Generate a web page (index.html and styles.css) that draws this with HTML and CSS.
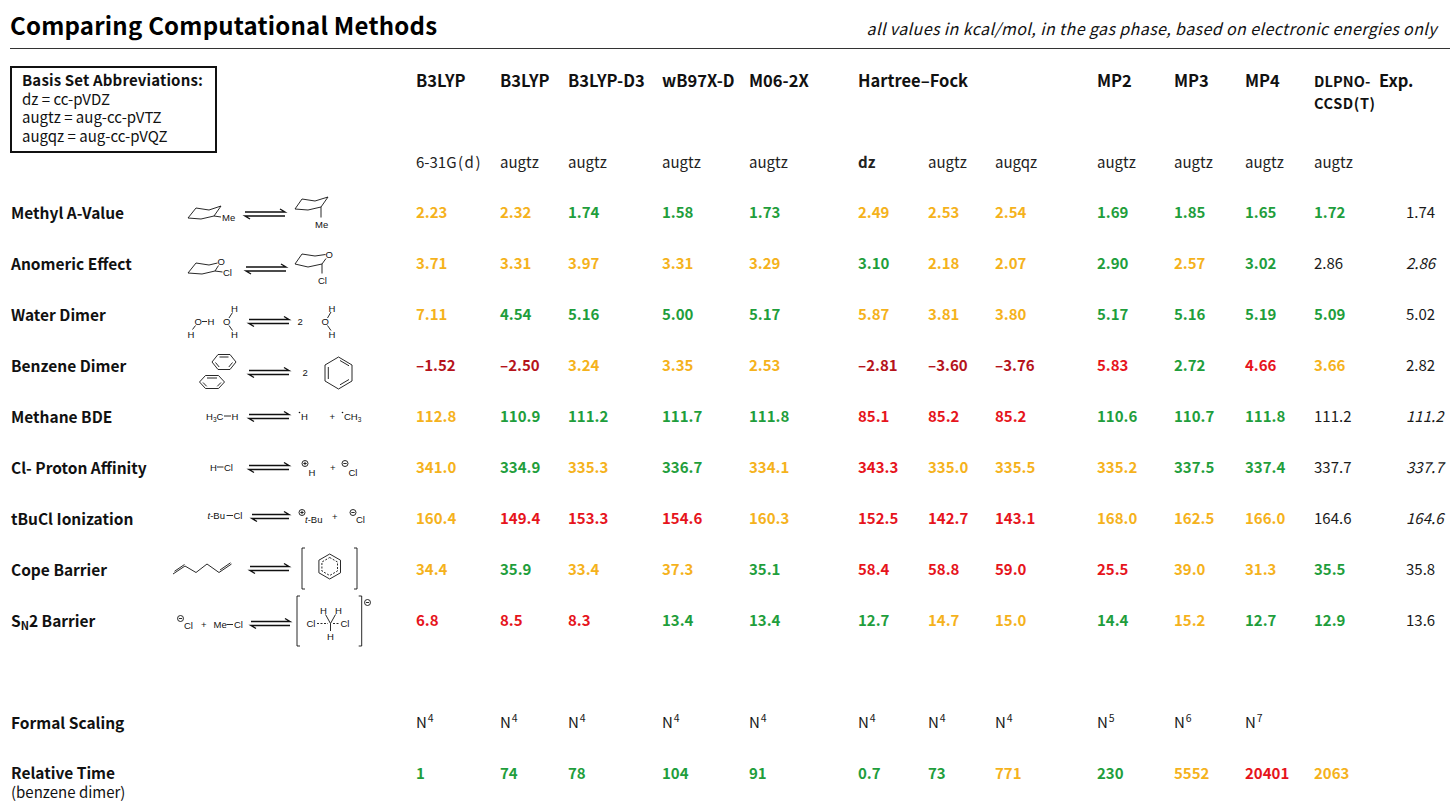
FILE: index.html
```html
<!DOCTYPE html>
<html lang="en">
<head>
<meta charset="utf-8">
<title>Comparing Computational Methods</title>
<link rel="stylesheet" href="styles.css">
</head>
<body>
<header class="top">
  <h1 class="title">Comparing Computational Methods</h1>
  <p class="subtitle">all values in kcal/mol, in the gas phase, based on electronic energies only</p>
</header>
<main class="table">
  <div class="basis-box">
    <div class="basis-head">Basis Set Abbreviations:</div>
    <div>dz = cc-pVDZ</div>
    <div>augtz = aug-cc-pVTZ</div>
    <div>augqz = aug-cc-pVQZ</div>
  </div>

  <div class="hd">B3LYP</div>
  <div class="hd">B3LYP</div>
  <div class="hd">B3LYP-D3</div>
  <div class="hd">wB97X-D</div>
  <div class="hd">M06-2X</div>
  <div class="hd">Hartree–Fock</div>
  <div class="hd"></div>
  <div class="hd"></div>
  <div class="hd">MP2</div>
  <div class="hd">MP3</div>
  <div class="hd">MP4</div>
  <div class="hd hd-small"><div>DLPNO-</div><div class="wide">CCSD(T)</div></div>
  <div class="hd">Exp.</div>

  <div class="bs"><span>6-31G<span class="pp">(</span>d<span class="pp">)</span></span></div>
  <div class="bs">augtz</div>
  <div class="bs">augtz</div>
  <div class="bs">augtz</div>
  <div class="bs">augtz</div>
  <div class="bs bold">dz</div>
  <div class="bs">augtz</div>
  <div class="bs">augqz</div>
  <div class="bs">augtz</div>
  <div class="bs">augtz</div>
  <div class="bs">augtz</div>
  <div class="bs">augtz</div>
  <div class="bs"></div>

  <!-- Row 1 -->
  <div class="lab">Methyl A-Value</div>
  <div class="st">
    <svg class="mol" viewBox="170 187 246 51" width="246" height="51">
      <g class="ln">
        <path d="M188 219 L196 209 L209 211 L221 207 L214 217 L201 220 Z"/>
        <path d="M214 217 L221 218"/>
        <path class="arr" d="M245 213 H285 l-5 -3 M285 217 H245 l5 3"/>
        <path d="M295 210 L302 200 L315 202 L328 198 L321 208 L308 211 Z"/>
        <path d="M321 208 V218.5"/>
      </g>
      <text x="222" y="221.5">Me</text>
      <text x="315" y="228.5">Me</text>
    </svg>
  </div>
  <div class="v o">2.23</div><div class="v o">2.32</div><div class="v g">1.74</div><div class="v g">1.58</div><div class="v g">1.73</div>
  <div class="v o">2.49</div><div class="v o">2.53</div><div class="v o">2.54</div>
  <div class="v g">1.69</div><div class="v g">1.85</div><div class="v g">1.65</div><div class="v g">1.72</div><div class="v exp">1.74</div>

  <!-- Row 2 -->
  <div class="lab">Anomeric Effect</div>
  <div class="st">
    <svg class="mol" viewBox="170 238 246 51" width="246" height="51">
      <g class="ln">
        <path d="M217.5 264 L209 266 L196 264 L188 274 L202 275 L215 272 L218.5 266.5"/>
        <path d="M215 272 L222.5 273"/>
        <path class="arr" d="M246 268 H286 l-5 -3 M286 272 H246 l5 3"/>
        <path d="M325.5 255.5 L315 257 L302 255 L295 265 L308 268 L322 265 L326 259.5"/>
        <path d="M322 265 V274.5"/>
      </g>
      <text x="217.5" y="266">O</text>
      <text x="223" y="276.5">Cl</text>
      <text x="325.5" y="259">O</text>
      <text x="318" y="284.5">Cl</text>
    </svg>
  </div>
  <div class="v o">3.71</div><div class="v o">3.31</div><div class="v o">3.97</div><div class="v o">3.31</div><div class="v o">3.29</div>
  <div class="v g">3.10</div><div class="v o">2.18</div><div class="v o">2.07</div>
  <div class="v g">2.90</div><div class="v o">2.57</div><div class="v g">3.02</div><div class="v k">2.86</div><div class="v exp it">2.86</div>

  <!-- Row 3 -->
  <div class="lab">Water Dimer</div>
  <div class="st">
    <svg class="mol" viewBox="170 289 246 51" width="246" height="51">
      <g class="ln">
        <path d="M202 322.5 H207"/>
        <path d="M195.5 326.5 L192.5 330.5"/>
        <path d="M229 319 L232.5 313.5 M229 326.5 L232.5 331.5"/>
        <path class="arr" d="M249 320.5 H289 l-5 -3 M289 324.5 H249 l5 3"/>
        <path d="M327.5 319 L331 313 M327.5 326.5 L331 331.5"/>
      </g>
      <text x="194.5" y="326">O</text>
      <text x="207.5" y="326">H</text>
      <text x="187.5" y="338.5">H</text>
      <text x="231" y="313">H</text>
      <text x="223" y="326">O</text>
      <text x="231" y="338.5">H</text>
      <text x="297.5" y="326">2</text>
      <text x="328.5" y="312.5">H</text>
      <text x="321.5" y="326">O</text>
      <text x="328.5" y="338.5">H</text>
    </svg>
  </div>
  <div class="v o">7.11</div><div class="v g">4.54</div><div class="v g">5.16</div><div class="v g">5.00</div><div class="v g">5.17</div>
  <div class="v o">5.87</div><div class="v o">3.81</div><div class="v o">3.80</div>
  <div class="v g">5.17</div><div class="v g">5.16</div><div class="v g">5.19</div><div class="v g">5.09</div><div class="v exp">5.02</div>

  <!-- Row 4 -->
  <div class="lab">Benzene Dimer</div>
  <div class="st">
    <svg class="mol" viewBox="170 340 246 51" width="246" height="51">
      <g class="ln">
        <path d="M212 363 L218 355.5 L230 355.5 L236 363 L230 370.5 L218 370.5 Z"/>
        <path d="M219.5 358 H228.5 M232.5 363.5 L228.8 368 M215.5 363.5 L219.2 368"/>
        <path d="M199.5 383 L205.5 376.5 L218.5 376.5 L224.5 383 L218.5 389.5 L205.5 389.5 Z"/>
        <path d="M207 379 H217 M221 383.5 L217.3 387.3 M203 383.5 L206.7 387.3"/>
        <path class="arr" d="M249 371.5 H289 l-5 -3 M289 375.5 H249 l5 3"/>
        <path d="M338.5 358 L352 366 L352 382 L338.5 390 L325 382 L325 366 Z"/>
        <path d="M340 361.5 L349 366.8 M349 380.5 L340 385.8 M328.3 380 V368"/>
      </g>
      <text x="302.5" y="376.5">2</text>
    </svg>
  </div>
  <div class="v d">–1.52</div><div class="v d">–2.50</div><div class="v o">3.24</div><div class="v o">3.35</div><div class="v o">2.53</div>
  <div class="v d">–2.81</div><div class="v d">–3.60</div><div class="v d">–3.76</div>
  <div class="v r">5.83</div><div class="v g">2.72</div><div class="v r">4.66</div><div class="v o">3.66</div><div class="v exp">2.82</div>

  <!-- Row 5 -->
  <div class="lab">Methane BDE</div>
  <div class="st">
    <svg class="mol" viewBox="170 391 246 51" width="246" height="51">
      <g class="ln">
        <path d="M224 417 H231"/>
        <path class="arr" d="M249 415.5 H289 l-5 -3 M289 419.5 H249 l5 3"/>
      </g>
      <text x="206" y="420.5">H<tspan class="sub" dy="2">3</tspan><tspan dy="-2">C</tspan></text>
      <text x="231.5" y="420.5">H</text>
      <circle class="dot" cx="299.5" cy="413.5" r="0.8"/>
      <text x="301" y="420.5">H</text>
      <text x="329.5" y="420.5">+</text>
      <circle class="dot" cx="342.5" cy="413.5" r="0.8"/>
      <text x="344" y="420.5">CH<tspan class="sub" dy="2">3</tspan></text>
    </svg>
  </div>
  <div class="v o">112.8</div><div class="v g">110.9</div><div class="v g">111.2</div><div class="v g">111.7</div><div class="v g">111.8</div>
  <div class="v r">85.1</div><div class="v r">85.2</div><div class="v r">85.2</div>
  <div class="v g">110.6</div><div class="v g">110.7</div><div class="v g">111.8</div><div class="v k">111.2</div><div class="v exp it">111.2</div>

  <!-- Row 6 -->
  <div class="lab">Cl- Proton Affinity</div>
  <div class="st">
    <svg class="mol" viewBox="170 442 246 51" width="246" height="51">
      <g class="ln">
        <path d="M217 468 H223.5"/>
        <path class="arr" d="M249 466.5 H289 l-5 -3 M289 470.5 H249 l5 3"/>
        <circle cx="305" cy="464.5" r="3"/>
        <path d="M303.3 464.5 H306.7 M305 462.8 V466.2"/>
        <circle cx="345" cy="464.5" r="3"/>
        <path d="M343.3 464.5 H346.7"/>
      </g>
      <text x="210" y="471.5">H</text>
      <text x="224" y="471.5">Cl</text>
      <text x="308.5" y="476.5">H</text>
      <text x="330" y="471.5">+</text>
      <text x="348.5" y="476.5">Cl</text>
    </svg>
  </div>
  <div class="v o">341.0</div><div class="v g">334.9</div><div class="v o">335.3</div><div class="v g">336.7</div><div class="v o">334.1</div>
  <div class="v r">343.3</div><div class="v o">335.0</div><div class="v o">335.5</div>
  <div class="v o">335.2</div><div class="v g">337.5</div><div class="v g">337.4</div><div class="v k">337.7</div><div class="v exp it">337.7</div>

  <!-- Row 7 -->
  <div class="lab">tBuCl Ionization</div>
  <div class="st">
    <svg class="mol" viewBox="170 493 246 51" width="246" height="51">
      <g class="ln">
        <path d="M226.5 516.5 H233"/>
        <path class="arr" d="M252 515.5 H289 l-5 -3 M289 519.5 H252 l5 3"/>
        <circle cx="302" cy="513.5" r="3"/>
        <path d="M300.3 513.5 H303.7 M302 511.8 V515.2"/>
        <circle cx="353" cy="513.5" r="3"/>
        <path d="M351.3 513.5 H354.7"/>
      </g>
      <text x="207.5" y="520"><tspan class="ital">t</tspan>-Bu</text>
      <text x="233.5" y="520">Cl</text>
      <text x="305" y="524"><tspan class="ital">t</tspan>-Bu</text>
      <text x="332" y="521">+</text>
      <text x="356" y="524">Cl</text>
    </svg>
  </div>
  <div class="v o">160.4</div><div class="v r">149.4</div><div class="v r">153.3</div><div class="v r">154.6</div><div class="v o">160.3</div>
  <div class="v r">152.5</div><div class="v r">142.7</div><div class="v r">143.1</div>
  <div class="v o">168.0</div><div class="v o">162.5</div><div class="v o">166.0</div><div class="v k">164.6</div><div class="v exp it">164.6</div>

  <!-- Row 8 -->
  <div class="lab">Cope Barrier</div>
  <div class="st">
    <svg class="mol" viewBox="170 544 246 51" width="246" height="51">
      <g class="ln">
        <path d="M173 575 L185 567 L196 573.5 L207 565 L219 573.5 L231.5 565"/>
        <path d="M174.5 572.3 L184.5 565.5 M220 571 L230.5 563.8"/>
        <path class="arr" d="M250 567.5 H289 l-5 -3 M289 571.5 H250 l5 3"/>
        <path d="M305 549 H302 V590 H305 M354 549 H357 V590 H354"/>
        <path d="M329.7 555 L340.5 561.2 L340.5 573.8 L329.7 580 L318.9 573.8 L318.9 561.2 Z"/>
        <path class="dash" d="M329.7 558.5 L337.5 563 L337.5 572 L329.7 576.5 L321.9 572 L321.9 563 Z"/>
      </g>
    </svg>
  </div>
  <div class="v o">34.4</div><div class="v g">35.9</div><div class="v o">33.4</div><div class="v o">37.3</div><div class="v g">35.1</div>
  <div class="v r">58.4</div><div class="v r">58.8</div><div class="v r">59.0</div>
  <div class="v r">25.5</div><div class="v o">39.0</div><div class="v o">31.3</div><div class="v g">35.5</div><div class="v exp">35.8</div>

  <!-- Row 9 -->
  <div class="lab"><span>S<sub class="lsub">N</sub>2 Barrier</span></div>
  <div class="st">
    <svg class="mol" viewBox="170 595 246 51" width="246" height="51">
      <g class="ln">
        <circle cx="180.5" cy="619.5" r="3"/>
        <path d="M178.8 619.5 H182.2"/>
        <path d="M226.5 625.5 H233"/>
        <path class="arr" d="M251 622.5 H290 l-5 -3 M290 626.5 H251 l5 3"/>
        <path d="M300 597 H297 V647 H300 M358.7 597 H361.7 V647 H358.7"/>
        <circle cx="367.5" cy="603.5" r="3"/>
        <path d="M365.8 603.5 H369.2"/>
        <path class="dash" d="M317 624.5 H328 M333 624.5 H340"/>
        <path d="M330.5 624.5 L325.5 615.5 M330.5 624.5 L335.5 615.5 M330.5 624.5 V632"/>
      </g>
      <text x="184" y="629.5">Cl</text>
      <text x="201" y="629">+</text>
      <text x="213.5" y="629">Me</text>
      <text x="234" y="629">Cl</text>
      <text x="306.5" y="628">Cl</text>
      <text x="340.5" y="628">Cl</text>
      <text x="320" y="614.5">H</text>
      <text x="335" y="614.5">H</text>
      <text x="327" y="641">H</text>
    </svg>
  </div>
  <div class="v r">6.8</div><div class="v r">8.5</div><div class="v r">8.3</div><div class="v g">13.4</div><div class="v g">13.4</div>
  <div class="v g">12.7</div><div class="v o">14.7</div><div class="v o">15.0</div>
  <div class="v g">14.4</div><div class="v o">15.2</div><div class="v g">12.7</div><div class="v g">12.9</div><div class="v exp">13.6</div>

  <div class="spacer"></div>

  <!-- Formal scaling -->
  <div class="lab">Formal Scaling</div>
  <div class="st"></div>
  <div class="v k"><span>N<sup class="pw">4</sup></span></div><div class="v k"><span>N<sup class="pw">4</sup></span></div><div class="v k"><span>N<sup class="pw">4</sup></span></div><div class="v k"><span>N<sup class="pw">4</sup></span></div><div class="v k"><span>N<sup class="pw">4</sup></span></div>
  <div class="v k"><span>N<sup class="pw">4</sup></span></div><div class="v k"><span>N<sup class="pw">4</sup></span></div><div class="v k"><span>N<sup class="pw">4</sup></span></div>
  <div class="v k"><span>N<sup class="pw">5</sup></span></div><div class="v k"><span>N<sup class="pw">6</sup></span></div><div class="v k"><span>N<sup class="pw">7</sup></span></div><div class="v"></div><div class="v"></div>

  <!-- Relative time -->
  <div class="lab lab-two"><span>Relative Time</span><span class="lab-note">(benzene dimer)</span></div>
  <div class="st"></div>
  <div class="v g">1</div><div class="v g">74</div><div class="v g">78</div><div class="v g">104</div><div class="v g">91</div>
  <div class="v g">0.7</div><div class="v g">73</div><div class="v o">771</div>
  <div class="v g">230</div><div class="v o">5552</div><div class="v r">20401</div><div class="v o">2063</div><div class="v"></div>
</main>
</body>
</html>
```

FILE: styles.css
```css
html, body {
  margin: 0;
  padding: 0;
  background: #ffffff;
}

body {
  font-family: "Noto Sans CJK JP", "Noto Sans", sans-serif;
  color: #1a1a1a;
  width: 1456px;
  height: 809px;
  overflow: hidden;
}

.top {
  display: flex;
  justify-content: space-between;
  align-items: baseline;
  margin: 0 6px 0 10px;
  padding-top: 10px;
  height: 38px;
  border-bottom: 1px solid #333;
  box-sizing: content-box;
}

.title {
  margin: 0;
  font-size: 24px;
  line-height: 30px;
  font-weight: 700;
  letter-spacing: 0.2px;
  color: #000;
}

.subtitle {
  margin: 0 13px 0 0;
  font-size: 16px;
  font-style: italic;
  line-height: 30px;
  letter-spacing: 0.4px;
  color: #111;
}

.table {
  display: grid;
  margin-top: 10px;
  padding-left: 11px;
  grid-template-columns: 159px 246px 84px 68px 94px 87px 109px 70px 67px 102px 77px 71px 69px 65px 1fr;
  grid-template-rows: 77px 50px repeat(9, 51px) 51px 51px 51px;
  font-size: 15px;
}

.basis-box {
  grid-column: span 2;
  grid-row: span 2;
  align-self: start;
  justify-self: start;
  margin: 7px 0 0 -1px;
  width: 207px;
  height: 87px;
  box-sizing: border-box;
  border: 2px solid #111;
  padding: 3px 10px 5px 10px;
  font-size: 15px;
  line-height: 18.7px;
  color: #111;
}

.basis-head {
  font-weight: 700;
  letter-spacing: 0.15px;
}

.hd {
  padding-top: 12px;
  font-size: 16.5px;
  font-weight: 700;
  line-height: 18px;
  color: #111;
  white-space: nowrap;
}

.hd-small {
  padding-top: 11px;
  font-size: 14.5px;
  line-height: 21.5px;
  letter-spacing: 0.1px;
}

.hd-small .wide {
  letter-spacing: 0.6px;
}

.pp {
  margin: 0 1.5px;
}

.bs {
  display: flex;
  align-items: center;
  color: #222;
  white-space: nowrap;
}

.bold {
  font-weight: 700;
}

.lab {
  display: flex;
  align-items: center;
  font-size: 15.5px;
  font-weight: 700;
  color: #111;
  white-space: nowrap;
}

.lab-two {
  flex-direction: column;
  align-items: flex-start;
  justify-content: center;
  padding-top: 18px;
  line-height: 19px;
}

.lab-note {
  font-weight: 400;
  font-size: 15px;
}

.lsub {
  font-size: 11px;
  vertical-align: -3px;
  line-height: 0;
}

.st {
  position: relative;
}

.mol {
  display: block;
  overflow: visible;
}

.mol .ln {
  fill: none;
  stroke: #111;
  stroke-width: 0.9;
}

.mol .arr {
  stroke-width: 1.4;
}

.mol .dash {
  stroke-dasharray: 2 1.5;
}

.mol .dot {
  fill: #111;
}

.mol text {
  font-family: "Liberation Sans", Arial, sans-serif;
  font-size: 9.5px;
  fill: #111;
}

.mol .sub {
  font-size: 6.5px;
}

.mol .ital {
  font-style: italic;
}

.v {
  display: flex;
  align-items: center;
  white-space: nowrap;
}

.exp {
  padding-left: 27px;
  color: #1a1a1a;
}

.it {
  font-style: italic;
}

.o {
  color: #f5b21c;
  font-weight: 700;
}

.g {
  color: #1f9e3c;
  font-weight: 700;
}

.r {
  color: #e6141c;
  font-weight: 700;
}

.d {
  color: #b5131b;
  font-weight: 700;
}

.k {
  color: #1a1a1a;
}

.pw {
  font-size: 10.5px;
  vertical-align: 6px;
  line-height: 0;
  margin-left: 1px;
}

.spacer {
  grid-column: 1 / -1;
}
```
